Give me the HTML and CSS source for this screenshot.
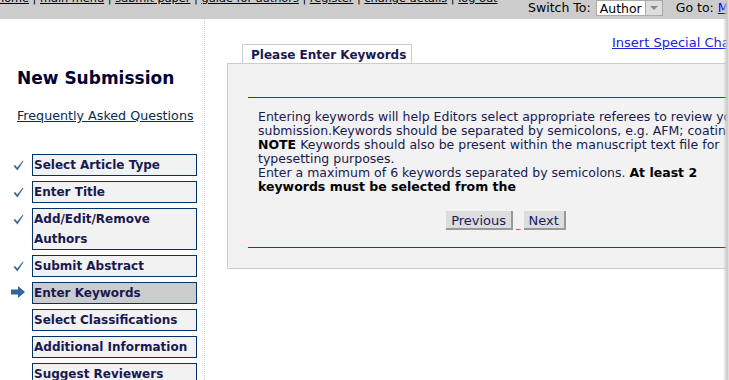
FILE: index.html
```html
<!DOCTYPE html>
<html lang="en">

<head>
    <meta charset="UTF-8">
    <title>New Submission</title>
    <link rel="stylesheet" href="styles.css">
</head>

<body>

    <div class="topbar">
        <div class="toplinks">
            <a href="#">home</a> | <a href="#">main menu</a> | <a href="#">submit paper</a> |
            <a href="#">guide for authors</a> | <a href="#">register</a> | <a href="#">change details</a> |
            <a href="#">log out</a>
        </div>
        <div class="switch">
            <span>Switch To:</span>
            <span class="select">Author<span class="arrow"></span></span>
            <span class="goto">Go to: <a href="#">My EES Hub</a></span>
        </div>
    </div>

    <div class="page">
        <div class="sidebar">
            <h1>New Submission</h1>
            <a class="faq" href="#">Frequently Asked Questions</a>
            <ul class="steps">
                <li class="done"><span class="step">Select Article Type</span></li>
                <li class="done"><span class="step">Enter Title</span></li>
                <li class="done"><span class="step">Add/Edit/Remove Authors</span></li>
                <li class="done"><span class="step">Submit Abstract</span></li>
                <li class="current"><span class="step">Enter Keywords</span></li>
                <li><span class="step">Select Classifications</span></li>
                <li><span class="step">Additional Information</span></li>
                <li><span class="step">Suggest Reviewers</span></li>
            </ul>
        </div>

        <div class="content">
            <div class="special"><a href="#">Insert Special Character</a></div>
            <div class="tab">Please Enter Keywords</div>
            <div class="panel">
                <div class="rule"></div>
                <p class="intro">
                    Entering keywords will help Editors select appropriate referees to review your<br>
                    submission.Keywords should be separated by semicolons, e.g. AFM; coatings<br>
                    <b>NOTE</b> Keywords should also be present within the manuscript text file for<br>
                    typesetting purposes.<br>
                    Enter a maximum of 6 keywords separated by semicolons. <b>At least 2</b><br>
                    <b>keywords must be selected from the</b>
                </p>
                <div class="buttons">
                    <button>Previous</button><span class="sep">_</span><button>Next</button>
                </div>
                <div class="rule"></div>
            </div>
        </div>
    </div>

    <div class="edge"></div>

</body>

</html>
```

FILE: styles.css
```css
html,
body {
    margin: 0;
    padding: 0;
    overflow: hidden;
}

body {
    font-family: "DejaVu Sans", Verdana, sans-serif;
    font-size: 12px;
    color: #000;
    background-color: #fff;
    width: 729px;
    height: 380px;
    position: relative;
}

a {
    color: inherit;
}

/* top bar */

.topbar {
    height: 19px;
    background-color: #cccccc;
    display: grid;
    grid-template-columns: 528px auto;
    overflow: hidden;
    white-space: nowrap;
}

.toplinks {
    margin-top: -8px;
    margin-left: -3px;
    font-size: 11.3px;
}

.switch {
    display: flex;
    align-items: flex-start;
    font-size: 12.5px;
}

.select {
    display: inline-flex;
    align-items: center;
    height: 14px;
    padding-left: 3px;
    margin-left: 5px;
    background-color: #fff;
    border: 1px solid #aaa;
}

.arrow {
    width: 16px;
    height: 14px;
    margin-left: 3px;
    background-color: #dedede;
    border-left: 1px solid #aaa;
    position: relative;
}

.arrow::after {
    content: "";
    position: absolute;
    left: 4px;
    top: 5px;
    border-left: 4px solid transparent;
    border-right: 4px solid transparent;
    border-top: 4px solid #888;
}

.goto {
    margin-left: 13px;
}

.goto a {
    color: #0000ee;
}

/* layout */

.page {
    display: flex;
}

.sidebar {
    width: 204px;
    flex-shrink: 0;
    padding-top: 49px;
    border-right: 1px dotted #cfcfcf;
    margin-right: 22px;
}

.sidebar h1 {
    margin: 0 0 0 17px;
    font-size: 17px;
    color: #000033;
}

.faq {
    display: block;
    margin: 20px 0 0 17px;
    font-size: 12.7px;
    color: #0a2850;
}

.steps {
    list-style: none;
    margin: 31px 0 0 0;
    padding: 0 0 0 32px;
}

.steps li {
    position: relative;
    margin-bottom: 5px;
}

.step {
    display: block;
    width: 162px;
    padding-left: 1px;
    line-height: 20px;
    border: 1px solid #003366;
    background-color: #f2f2f2;
    color: #191950;
    font-weight: bold;
}

.current .step {
    background-color: #cccccc;
}

.done::before {
    content: "";
    position: absolute;
    left: -19px;
    top: 6px;
    width: 11px;
    height: 11px;
    background: url("data:image/svg+xml,%3Csvg xmlns='http://www.w3.org/2000/svg' viewBox='0 0 10 10'%3E%3Cpath d='M0.5 5.5 L2 4.5 L3.8 6.8 L9 0.5 L9.5 1.2 L4 9.5 Z' fill='%233a6a9a'/%3E%3C/svg%3E") no-repeat;
}

.current::before {
    content: "";
    position: absolute;
    left: -21px;
    top: 4px;
    width: 14px;
    height: 12px;
    background: url("data:image/svg+xml,%3Csvg xmlns='http://www.w3.org/2000/svg' viewBox='0 0 14 12'%3E%3Cpath d='M0 3.5 H7 V0 L14 6 L7 12 V8.5 H0 Z' fill='%23336699'/%3E%3C/svg%3E") no-repeat;
}

/* content */

.content {
    flex-shrink: 0;
    padding-top: 16px;
    position: relative;
}

.special {
    position: absolute;
    left: 385px;
    top: 16px;
    font-size: 13px;
    white-space: nowrap;
}

.special a {
    color: #2020dd;
}

.tab {
    display: inline-block;
    margin: 9px 0 0 15px;
    padding: 3px 5px 1px 8px;
    border: 1px solid #cccccc;
    border-bottom: none;
    background-color: #fff;
    font-weight: bold;
    font-size: 12px;
    color: #191950;
}

.panel {
    width: 516px;
    padding: 33px 20px 20px 20px;
    background-color: #f2f2f2;
    border: 1px solid #cccccc;
}

.rule {
    height: 1px;
    background-color: #cc0000;
}

.intro {
    margin: 12px 0 0 10px;
    line-height: 14px;
    font-size: 12.5px;
    white-space: nowrap;
    color: #191950;
}

.intro b {
    color: #000;
}

.buttons {
    display: flex;
    justify-content: center;
    align-items: flex-end;
    margin: 17px 0 17px 0;
}

.buttons button {
    font-family: "DejaVu Sans", Verdana, sans-serif;
    font-size: 13px;
    color: #191960;
    background-color: #dddddd;
    border: none;
    border-right: 2px solid #999;
    border-bottom: 2px solid #999;
    padding: 1px 5px 0 5px;
    height: 19px;
}

.sep {
    color: #cc0000;
    font-size: 9px;
    margin: 0 3px;
    line-height: 10px;
}

.edge {
    position: absolute;
    right: 0;
    top: 0;
    width: 6px;
    height: 380px;
    background: linear-gradient(to right, rgba(200, 200, 200, 0), #c8c8c8 70%, #e8e8e8);
}
```
